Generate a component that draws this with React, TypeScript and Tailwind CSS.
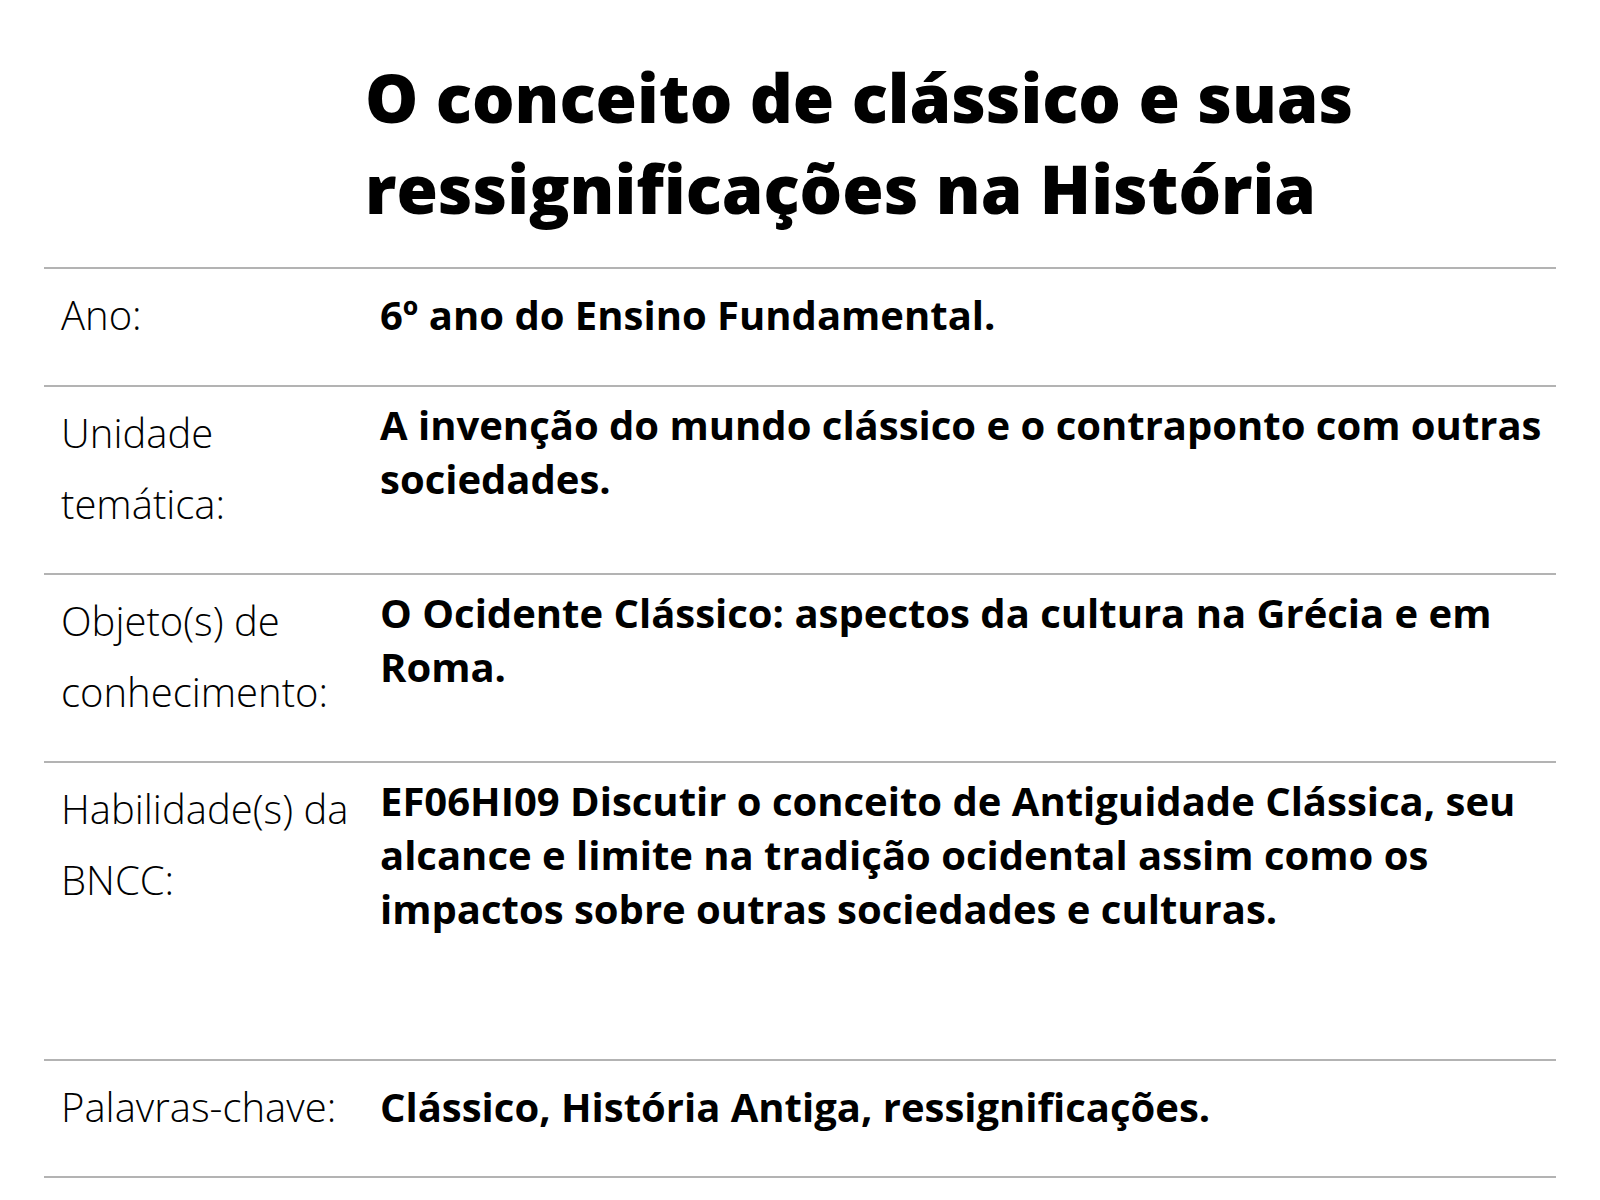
// ===== Data =====
type Row = {
  label: string;
  value: string;
  height: string; // row height, rule excluded
  valuePad: string;
};

const ROWS: Row[] = [
  { label: "Ano:", value: "6º ano do Ensino Fundamental.", height: "h-[116px]", valuePad: "pt-[19px]" },
  {
    label: "Unidade temática:",
    value: "A invenção do mundo clássico e o contraponto com outras sociedades.",
    height: "h-[186px]",
    valuePad: "pt-[11px]",
  },
  {
    label: "Objeto(s) de conhecimento:",
    value: "O Ocidente Clássico: aspectos da cultura na Grécia e em Roma.",
    height: "h-[186px]",
    valuePad: "pt-[11px]",
  },
  {
    label: "Habilidade(s) da BNCC:",
    value:
      "EF06HI09 Discutir o conceito de Antiguidade Clássica, seu alcance e limite na tradição ocidental assim como os impactos sobre outras sociedades e culturas.",
    height: "h-[296px]",
    valuePad: "pt-[11px]",
  },
  { label: "Palavras-chave:", value: "Clássico, História Antiga, ressignificações.", height: "h-[115px]", valuePad: "pt-[19px]" },
];

function Rule() {
  return <div className="h-[2px] w-full bg-[#b3b3b3]" />;
}

export default function App() {
  return (
    <main className="min-h-[1200px] w-[1600px] bg-white text-black font-['Open_Sans',sans-serif]">
      {/* ===== Title ===== */}
      <h1 className="pl-[365px] pt-[52px] text-[67px] leading-[91px] font-extrabold">
        O conceito de clássico e suas
        <br />
        ressignificações na História
      </h1>

      {/* ===== Table ===== */}
      <section className="mt-[33px] ml-[44px] w-[1512px]">
        <Rule />
        {ROWS.map((r) => (
          <div key={r.label}>
            <div className={`${r.height} grid grid-cols-[336px_1fr]`}>
              <div className="pl-[17px] pt-[10px] pr-2 text-[40px] leading-[71px] font-light">{r.label}</div>
              <div className={`${r.valuePad} text-[40px] leading-[54px] font-bold`}>{r.value}</div>
            </div>
            <Rule />
          </div>
        ))}
      </section>
    </main>
  );
}
